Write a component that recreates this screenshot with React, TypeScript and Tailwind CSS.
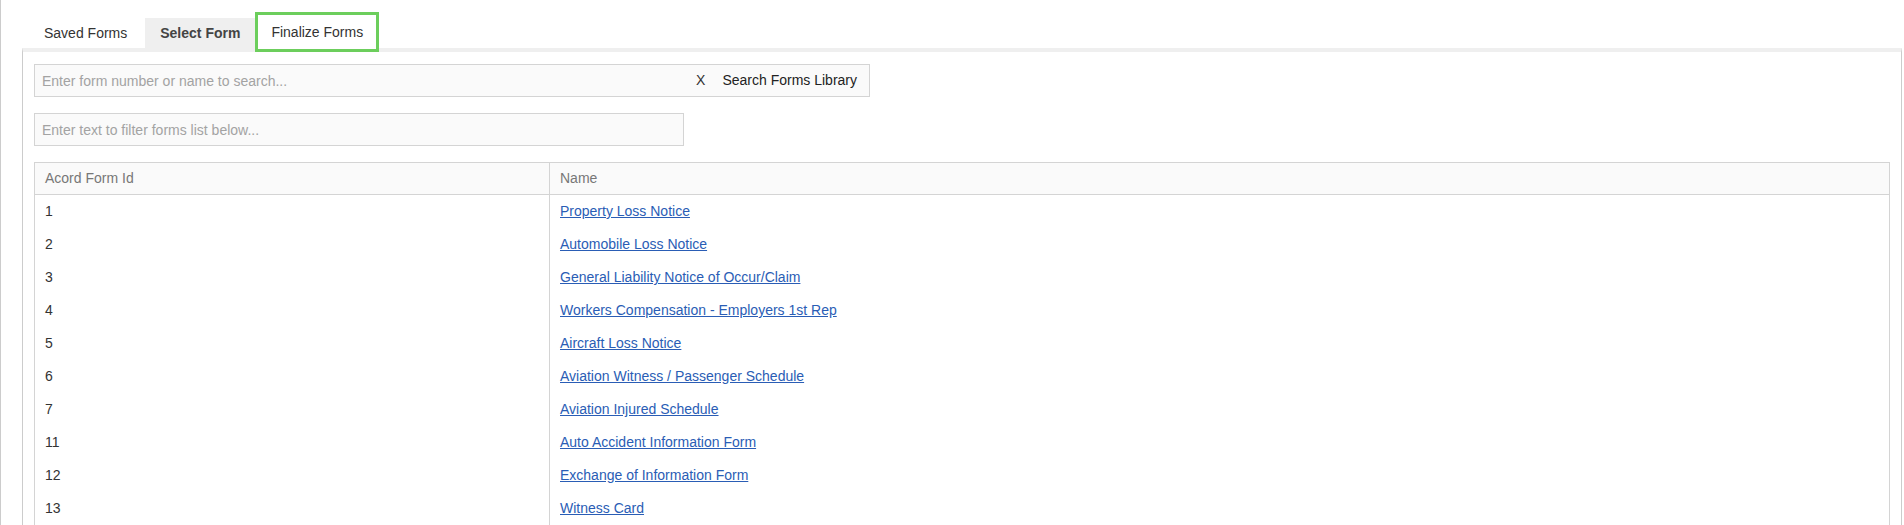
import React from 'react';

type FormRow = { id: number; name: string };

const forms: FormRow[] = [
  { id: 1, name: 'Property Loss Notice' },
  { id: 2, name: 'Automobile Loss Notice' },
  { id: 3, name: 'General Liability Notice of Occur/Claim' },
  { id: 4, name: 'Workers Compensation - Employers 1st Rep' },
  { id: 5, name: 'Aircraft Loss Notice' },
  { id: 6, name: 'Aviation Witness / Passenger Schedule' },
  { id: 7, name: 'Aviation Injured Schedule' },
  { id: 11, name: 'Auto Accident Information Form' },
  { id: 12, name: 'Exchange of Information Form' },
  { id: 13, name: 'Witness Card' },
];

function Tabs() {
  return (
    <div className="flex items-start pl-[25px] pt-[18px] text-[14px]">
      <button className="h-[30px] px-[18px] text-[#333]">Saved Forms</button>
      <button className="h-[30px] px-[15px] bg-[#efefef] font-bold text-[#444]">Select Form</button>
      {/* active tab, outlined */}
      <button className="relative z-10 -mt-[6px] -mb-[4px] h-[40px] px-[13px] bg-white border-[3px] border-[#6cce5c] text-[#333]">
        Finalize Forms
      </button>
    </div>
  );
}

function SearchBar() {
  return (
    <div className="mt-3 flex h-[33px] w-[836px] items-center border border-[#d4d4d4] bg-[#fafafa] text-[14px]">
      <input
        className="h-full flex-1 bg-transparent pl-[7px] outline-none placeholder:text-[#a3a3a3]"
        placeholder="Enter form number or name to search..."
      />
      <span className="px-[9px] text-[#333]">X</span>
      <button className="h-full pl-2 pr-3 text-[#222]">Search Forms Library</button>
    </div>
  );
}

function FormsTable() {
  return (
    <div className="mt-4 border border-[#d4d4d4] text-[14px]">
      <div className="grid h-[32px] grid-cols-[514px_1fr] items-center border-b border-[#d4d4d4] bg-[#fafafa] text-[#777]">
        <div className="pl-[10px]">Acord Form Id</div>
        <div className="flex h-full items-center border-l border-[#d4d4d4] pl-[10px]">Name</div>
      </div>
      {forms.map((f) => (
        <div key={f.id} className="grid h-[33px] grid-cols-[514px_1fr] items-center text-[#333]">
          <div className="pl-[10px]">{f.id}</div>
          <div className="flex h-full items-center border-l border-[#d4d4d4] pl-[10px]">
            <a href="#" className="text-[#2a5db5] underline">
              {f.name}
            </a>
          </div>
        </div>
      ))}
    </div>
  );
}

export default function App() {
  return (
    <div className="h-screen overflow-hidden border-l border-[#ccc] bg-white pr-[2px] font-['Liberation_Sans',Arial,sans-serif]">
      <Tabs />
      <div className="ml-[21px] border-t-4 border-x border-[#ccc] border-t-[#efefef] px-[11px]">
        <SearchBar />
        <input
          className="mt-4 block h-[33px] w-[650px] border border-[#d4d4d4] bg-[#fafafa] pl-[7px] text-[14px] outline-none placeholder:text-[#a3a3a3]"
          placeholder="Enter text to filter forms list below..."
        />
        <FormsTable />
      </div>
    </div>
  );
}
